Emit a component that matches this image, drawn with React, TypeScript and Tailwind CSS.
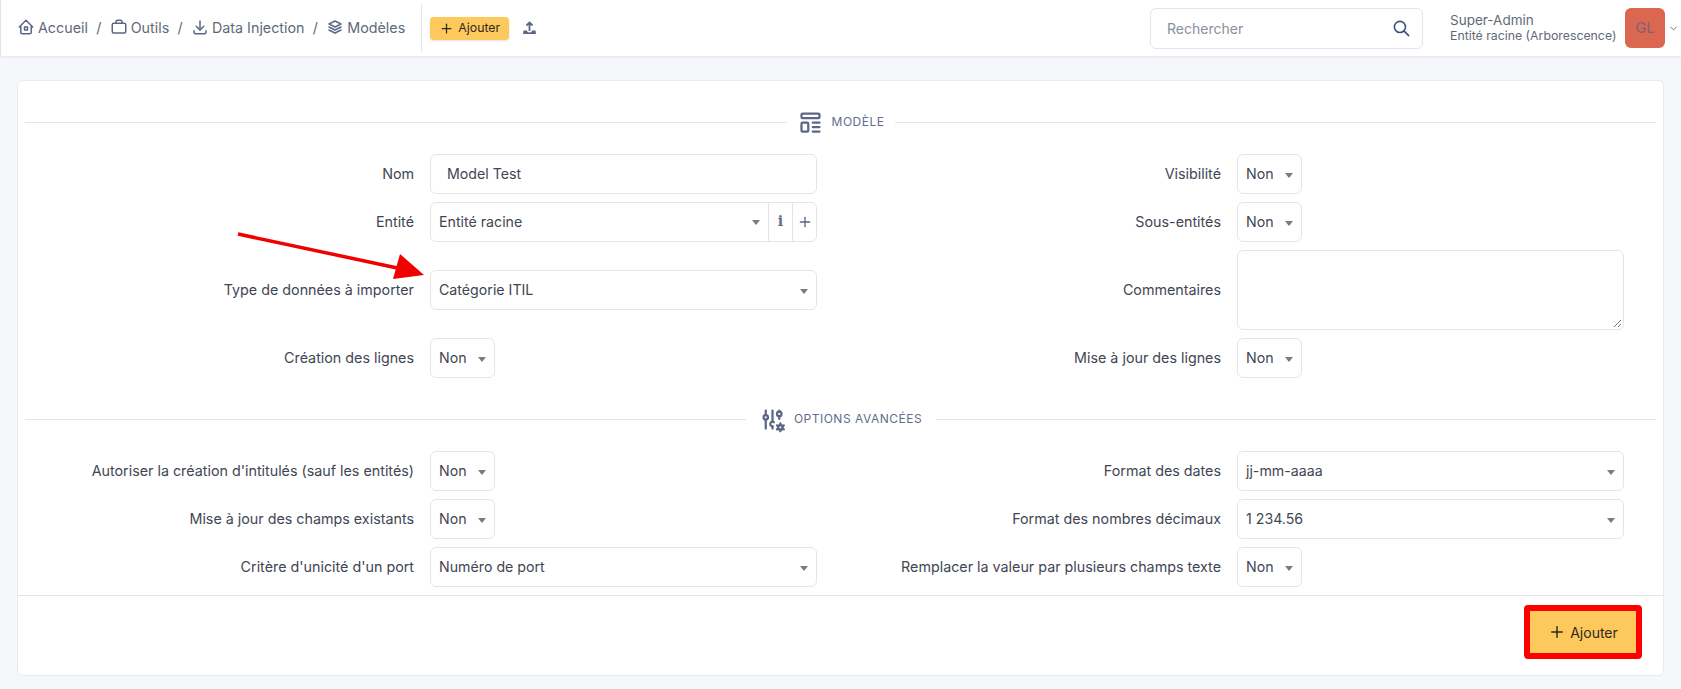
import type { ReactNode } from "react"
import {
  TbAdjustmentsCog,
  TbBriefcase2,
  TbChevronDown,
  TbDownload,
  TbHome2,
  TbPlus,
  TbSearch,
  TbStack2,
  TbTemplate,
} from "react-icons/tb"

const slate = "text-[#626976]"

function Crumb({ icon, label }: { icon: ReactNode; label: string }) {
  return (
    <span className={`flex items-center gap-[3px] ${slate}`}>
      <span className="text-[#5b6785] text-[18px] -mt-[2px]">{icon}</span>
      {label}
    </span>
  )
}

function Caret() {
  return <span className="w-0 h-0 border-x-[4px] border-x-transparent border-t-[5px] border-t-[#7b7b7b] mt-[2px]" />
}

function Select({ value, wide }: { value: string; wide?: boolean }) {
  return (
    <div
      className={`h-10 bg-white border border-[#e3e5e8] rounded-md flex items-center justify-between pl-2 pr-2 text-[14.2px] text-[#3f4654] ${
        wide ? "w-full" : "w-[65px]"
      }`}
    >
      <span>{value}</span>
      <Caret />
    </div>
  )
}

function Field({ label, children, labelWidth }: { label: string; children: ReactNode; labelWidth: string }) {
  return (
    <div className="flex items-center">
      <label className={`${labelWidth} shrink-0 text-right pr-4 text-[14.3px] text-[#3f4654] whitespace-nowrap`}>{label}</label>
      <div className="w-[387px]">{children}</div>
    </div>
  )
}

function Row({ left, right }: { left: ReactNode; right: ReactNode }) {
  return (
    <div className="flex items-center">
      <div className="w-[799px]">{left}</div>
      <div>{right}</div>
    </div>
  )
}

function Divider({ icon, label, width }: { icon: ReactNode; label: string; width: string }) {
  return (
    <div className="flex items-center mx-[7px] h-[34px]">
      <div className="flex-1 border-t border-[#e3e5e8]" />
      <div className={`flex items-center justify-center gap-2 ${width} text-[12px] tracking-[0.5px] text-[#626d8a]`}>
        <span className="text-[27px] text-[#5b6785]">{icon}</span>
        {label}
      </div>
      <div className="flex-1 border-t border-[#e3e5e8]" />
    </div>
  )
}

const L = "w-[412px]"
const R = "w-[420px]"

export default function App() {
  return (
    <div className="relative w-[1681px] h-[689px] overflow-hidden bg-[#f5f7fb] font-['Inter','Liberation_Sans',sans-serif]">
      <header className="h-14 bg-white border-l border-[#e3e5e8] shadow-[0_1px_3px_rgba(0,0,0,0.08)] flex items-center pl-4 pr-[2px] text-[14.3px]">
        <nav className="flex items-center gap-[8.3px] h-full">
          <Crumb icon={<TbHome2 />} label="Accueil" />
          <span className={slate}>/</span>
          <Crumb icon={<TbBriefcase2 />} label="Outils" />
          <span className={slate}>/</span>
          <Crumb icon={<TbDownload />} label="Data Injection" />
          <span className={slate}>/</span>
          <Crumb icon={<TbStack2 />} label="Modèles" />
        </nav>
        <div className="h-[48px] border-l border-[#e3e5e8] ml-[16px] mr-2" />
        <button className="h-[23px] w-[79px] bg-[#fec95c] rounded flex items-center justify-center gap-1 text-[12.3px] text-[#2f2a1e] shadow-sm">
          <TbPlus className="text-[15px]" />
          Ajouter
        </button>
        <svg className="ml-[13px]" width="15" height="16" viewBox="0 0 15 16" fill="none">
          <path d="M7.5 11V3M4.5 5.5 7.5 2.5l3 3" stroke="#5b6785" strokeWidth="1.8" />
          <path d="M1.5 10.5h3.5c0 1.2 1 2 2.5 2s2.5-.8 2.5-2h3.5l.5 3.5H1z" fill="#5b6785" />
        </svg>
        <div className="ml-auto flex items-center text-[14px]">
          <div className="w-[273px] h-[41px] bg-white border border-[#e3e5e8] rounded-md flex items-center justify-between pl-4 pr-[11px] text-[#8a909c]">
            Rechercher
            <TbSearch className="text-[19px] text-[#3d4f80]" />
          </div>
          <div className="ml-[27px] w-[175px] text-[#626976] leading-none">
            <div className="text-[13.5px] mb-[3px]">Super-Admin</div>
            <div className="text-[12.3px] whitespace-nowrap">Entité racine (Arborescence)</div>
          </div>
          <div className="w-10 h-10 bg-[#dc6750] rounded-md flex items-center justify-center text-[15px] text-[#7c6478]">GL</div>
          <TbChevronDown className="text-[11px] text-[#626976] ml-[3px]" />
        </div>
      </header>

      <main className="mx-[17px] mt-6 w-[1647px] h-[596px] bg-white border border-[#e8eaee] rounded-md flex flex-col">
        <div className="pt-6">
          <Divider icon={<TbTemplate />} label="MODÈLE" width="w-[108px]" />
        </div>
        <div className="flex flex-col gap-2 mt-[15px]">
          <Row
            left={
              <Field label="Nom" labelWidth={L}>
                <div className="h-10 border border-[#e3e5e8] rounded-md flex items-center pl-4 text-[14.2px] text-[#3f4654]">Model Test</div>
              </Field>
            }
            right={
              <Field label="Visibilité" labelWidth={R}>
                <Select value="Non" />
              </Field>
            }
          />
          <Row
            left={
              <Field label="Entité" labelWidth={L}>
                <div className="h-10 border border-[#e3e5e8] rounded-md flex items-center text-[14.2px] text-[#3f4654]">
                  <div className="flex-1 flex items-center justify-between pl-2 pr-2">
                    <span>Entité racine</span>
                    <Caret />
                  </div>
                  <div className="h-full w-6 border-l border-[#e3e5e8] flex items-center justify-center font-['DejaVu_Serif',serif] font-bold text-[#626d8a]">i</div>
                  <div className="h-full w-6 border-l border-[#e3e5e8] flex items-center justify-center text-[#5b6785]">
                    <TbPlus className="text-[16px]" />
                  </div>
                </div>
              </Field>
            }
            right={
              <Field label="Sous-entités" labelWidth={R}>
                <Select value="Non" />
              </Field>
            }
          />
          <Row
            left={
              <Field label="Type de données à importer" labelWidth={L}>
                <Select value="Catégorie ITIL" wide />
              </Field>
            }
            right={
              <Field label="Commentaires" labelWidth={R}>
                <div className="relative h-20 border border-[#e3e5e8] rounded-md">
                  <svg className="absolute right-[1px] bottom-[1px]" width="10" height="10" viewBox="0 0 10 10" stroke="#777">
                    <path d="M9 2 2 9M9 6 6 9" />
                  </svg>
                </div>
              </Field>
            }
          />
          <Row
            left={
              <Field label="Création des lignes" labelWidth={L}>
                <Select value="Non" />
              </Field>
            }
            right={
              <Field label="Mise à jour des lignes" labelWidth={R}>
                <Select value="Non" />
              </Field>
            }
          />
        </div>
        <div className="mt-[24px]">
          <Divider icon={<TbAdjustmentsCog />} label="OPTIONS AVANCÉES" width="w-[190px]" />
        </div>
        <div className="flex flex-col gap-2 mt-[15px]">
          <Row
            left={
              <Field label="Autoriser la création d'intitulés (sauf les entités)" labelWidth={L}>
                <Select value="Non" />
              </Field>
            }
            right={
              <Field label="Format des dates" labelWidth={R}>
                <Select value="jj-mm-aaaa" wide />
              </Field>
            }
          />
          <Row
            left={
              <Field label="Mise à jour des champs existants" labelWidth={L}>
                <Select value="Non" />
              </Field>
            }
            right={
              <Field label="Format des nombres décimaux" labelWidth={R}>
                <Select value="1 234.56" wide />
              </Field>
            }
          />
          <Row
            left={
              <Field label="Critère d'unicité d'un port" labelWidth={L}>
                <Select value="Numéro de port" wide />
              </Field>
            }
            right={
              <Field label="Remplacer la valeur par plusieurs champs texte" labelWidth={R}>
                <Select value="Non" />
              </Field>
            }
          />
        </div>
        <footer className="mt-2 flex-1 border-t border-[#e3e5e8] flex items-start justify-end pr-[21px] pt-[9px]">
          <button className="w-[118px] h-[54px] border-[6px] border-[#ff0000] rounded bg-[#fec95c] flex items-center justify-center gap-1 text-[14px] text-[#2f2a1e]">
            <TbPlus className="text-[18px]" />
            Ajouter
          </button>
        </footer>
      </main>

      <svg className="absolute left-[230px] top-[225px]" width="200" height="60" viewBox="0 0 200 60" fill="none">
        <path d="M8 9 172 44" stroke="#f00000" strokeWidth="3.5" />
        <path d="M194 50 163 54 170 29z" fill="#f00000" />
      </svg>
    </div>
  )
}
